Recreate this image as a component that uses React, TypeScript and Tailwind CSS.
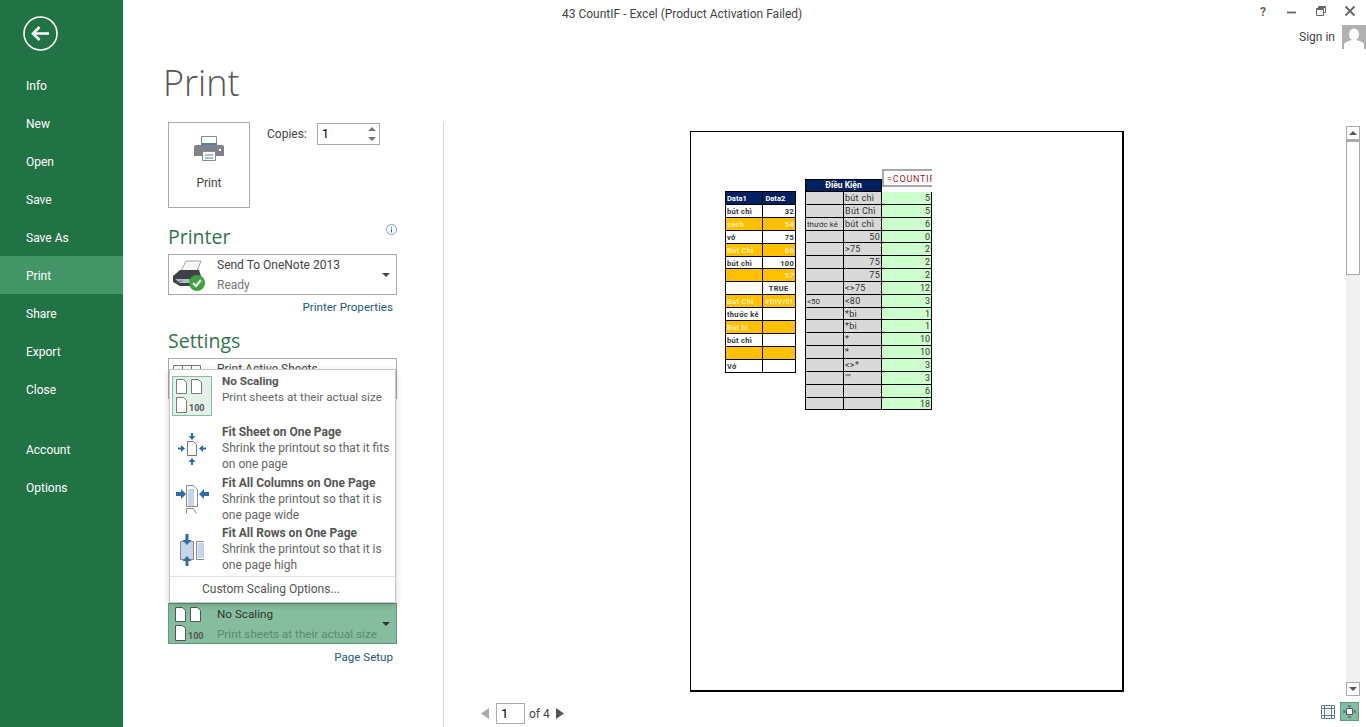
import React from "react";

const font = { fontFamily: 'Roboto, "Open Sans", sans-serif' };
const headFont = { fontFamily: '"Open Sans", "Noto Sans", sans-serif' };

const navTop = ["Info", "New", "Open", "Save", "Save As", "Print", "Share", "Export", "Close"];
const navBottom = ["Account", "Options"];

const dataRows = [
  { a: "bút chì", b: "32" },
  { a: "sách", b: "54", hl: true },
  { a: "vở", b: "75" },
  { a: "Bút Chì", b: "86", hl: true },
  { a: "bút chì", b: "100" },
  { a: "", b: "57", hl: true },
  { a: "", b: "TRUE", center: true },
  { a: "Bút Chì", b: "#DIV/0!", hl: true, center: true },
  { a: "thước kẻ", b: "" },
  { a: "Bút bi", b: "", hl: true },
  { a: "bút chì", b: "" },
  { a: "", b: "", hl: true },
  { a: "Vở", b: "" },
];

const condRows = [
  { a: "", b: "bút chì", c: "5" },
  { a: "", b: "Bút Chì", c: "5" },
  { a: "thước kẻ", b: "bút chì", c: "6" },
  { a: "", b: "50", c: "0", right: true },
  { a: "", b: ">75", c: "2" },
  { a: "", b: "75", c: "2", right: true },
  { a: "", b: "75", c: "2", right: true },
  { a: "", b: "<>75", c: "12" },
  { a: "<50", b: "<80", c: "3" },
  { a: "", b: "*bi", c: "1" },
  { a: "", b: "*bi", c: "1" },
  { a: "", b: "*", c: "10" },
  { a: "", b: "*", c: "10" },
  { a: "", b: "<>*", c: "3" },
  { a: "", b: '""', c: "3" },
  { a: "", b: "", c: "6" },
  { a: "", b: "", c: "18" },
];

const NoScalingIcon = ({ stroke = "#7a7a7a", fill = "#ffffff" }: { stroke?: string; fill?: string }) => (
  <svg width="34" height="34" viewBox="0 0 34 34">
    <path d="M1.500.5h7l3 3v11h-10z" fill={fill} stroke={stroke} />
    <path d="M16.500.5h7l3 3v11h-10z" fill={fill} stroke={stroke} />
    <path d="M1.500 18.500h7l3 3v12h-10z" fill={fill} stroke={stroke} />
    <text x="14" y="32" fontSize="9" fontWeight="700" fill="#555" style={font}>
      100
    </text>
  </svg>
);

const Arrow = ({ d }: { d: string }) => <path d={d} fill="#2f6ea5" />;

const FitSheetIcon = () => (
  <svg width="28" height="32" viewBox="0 0 28 32">
    <path d="M9.500 8.500h6l3 3v11h-9z" fill="#fff" stroke="#777" />
    <Arrow d="M13 0v3h-2.500l3.500 4 3.500-4h-2.500v-3z" />
    <Arrow d="M13 32v-3h-2.500l3.500-4 3.500 4h-2.500v3z" />
    <Arrow d="M0 14.500h3v-2.500l4 3.500-4 3.500v-2.500h-3z" />
    <Arrow d="M28 14.500h-3v-2.500l-4 3.500 4 3.500v-2.500h3z" />
  </svg>
);

const FitColsIcon = () => (
  <svg width="33" height="29" viewBox="0 0 33 29">
    <path d="M10.500.5h7l4 4v17h-11z" fill="#fff" stroke="#8a8a8a" />
    <path d="M12 4h6v17h-6z" fill="#c5d6ea" />
    <path d="M10.500 28.500v-5h7l3 5" fill="#fff" stroke="#8a8a8a" />
    <Arrow d="M0 7h5v-3l5 5-5 5v-3h-5z" />
    <Arrow d="M33 7h-5v-3l-5 5 5 5v-3h5z" />
  </svg>
);

const FitRowsIcon = () => (
  <svg width="26" height="32" viewBox="0 0 26 32">
    <path d="M1.500 7.500h13v18h-13z" fill="#c5d6ea" stroke="#8a8a8a" />
    <path d="M25 7.500h-7.500v18H25" fill="#fff" stroke="#8a8a8a" />
    <path d="M18.500 9h6.500v15h-6.500z" fill="#c5d6ea" />
    <Arrow d="M6.500 0v6h-3l4.500 5 4.500-5h-3v-6z" />
    <Arrow d="M6.500 32v-5h-3l4.500-5 4.500 5h-3v5z" />
  </svg>
);

const scalingOptions = [
  { title: "Fit Sheet on One Page", lines: ["Shrink the printout so that it fits", "on one page"], icon: <FitSheetIcon /> },
  { title: "Fit All Columns on One Page", lines: ["Shrink the printout so that it is", "one page wide"], icon: <FitColsIcon /> },
  { title: "Fit All Rows on One Page", lines: ["Shrink the printout so that it is", "one page high"], icon: <FitRowsIcon /> },
];

export default function App() {
  return (
    <div className="flex h-[727px] w-[1366px] overflow-hidden bg-white text-[#444]" style={font}>
      {/* backstage nav */}
      <div className="flex h-full w-[123px] shrink-0 flex-col bg-[#217346] text-[12px] text-white">
        <div className="flex h-[66px] shrink-0 items-start pl-[23px] pt-[16px]">
          <svg width="35" height="35" viewBox="0 0 35 35" fill="none" stroke="#fff">
            <circle cx="17.500" cy="17.500" r="16.500" strokeWidth="1.600" />
            <path d="M26 17.500H10M16.500 11l-6.500 6.500 6.500 6.500" strokeWidth="2.600" />
          </svg>
        </div>
        {navTop.map((item) => (
          <div
            key={item}
            className={`flex h-[38px] shrink-0 items-center pl-[26px] pt-[2px] ${item === "Print" ? "bg-[#439467]" : ""}`}
          >
            {item}
          </div>
        ))}
        <div className="h-[22px] shrink-0" />
        {navBottom.map((item) => (
          <div key={item} className="flex h-[38px] shrink-0 items-center pl-[26px] pt-[2px]">
            {item}
          </div>
        ))}
      </div>

      <div className="flex min-w-0 flex-1 flex-col">
        {/* title bar */}
        <div className="flex h-[50px] shrink-0 justify-between">
          <div className="pl-[439px] pt-[5px] text-[12px] text-[#444]">43 CountIF - Excel (Product Activation Failed)</div>
          <div className="flex flex-col items-end">
            <div className="flex h-[25px] items-start pr-[10px] pt-[5px]">
              <span className="mr-[20px] mt-[-2px] text-[12px] font-bold text-[#666]">?</span>
              <svg className="mr-[17px]" width="12" height="12" viewBox="0 0 12 12">
                <path d="M1 7.500h9" stroke="#666" strokeWidth="1.800" />
              </svg>
              <svg className="mr-[17px]" width="12" height="12" viewBox="0 0 12 12" fill="none" stroke="#666">
                <path d="M3.500 3V1.500h7v6H8" />
                <path d="M1.500 3.500h7v7h-7z" />
                <path d="M1.500 4.500h7M3.500 2.500h7" />
              </svg>
              <svg width="12" height="12" viewBox="0 0 12 12" stroke="#666" strokeWidth="1.800">
                <path d="M1.500 1.500l9 9M10.500 1.500l-9 9" />
              </svg>
            </div>
            <div className="flex h-[25px] items-start">
              <span className="mr-[7px] mt-[3px] text-[12px] text-[#444]">Sign in</span>
              <svg width="24" height="24" viewBox="0 0 24 24">
                <rect width="24" height="24" fill="#b1b1b1" />
                <ellipse cx="12" cy="9.500" rx="5" ry="6" fill="#fff" />
                <path d="M2 24v-4c0-3 5-4 7-5h6c2 1 7 2 7 5v4z" fill="#fff" />
              </svg>
            </div>
          </div>
        </div>

        <div className="h-[72px] shrink-0 pl-[40px] pt-[8px] text-[36px] font-light leading-[50px] text-[#555]" style={headFont}>
          Print
        </div>

        <div className="flex min-h-0 flex-1">
          {/* settings column */}
          <div className="flex w-[321px] shrink-0 flex-col border-r border-[#d9d9d9] pl-[45px] pr-[46px]">
            <div className="flex items-start">
              <div className="flex h-[86px] w-[82px] flex-col items-center border border-[#ababab] pt-[12px]">
                <svg width="30" height="27" viewBox="0 0 30 27">
                  <path d="M7.500 1.500h15v10h-15z" fill="#fff" stroke="#8a8a8a" />
                  <rect x="7" y="8" width="16" height="4" fill="#5a7fa8" />
                  <path d="M2 10h26a2 2 0 0 1 2 2v9h-30v-9a2 2 0 0 1 2-2z" fill="#7f8389" />
                  <path d="M8.500 16.500h13v9h-13z" fill="#fff" stroke="#8a8a8a" />
                  <path d="M11 20h8M11 23h8" stroke="#5a7fa8" />
                  <rect x="25" y="14" width="2" height="2" fill="#fff" />
                </svg>
                <span className="mt-[12px] text-[12px] text-[#444]">Print</span>
              </div>
              <span className="ml-[17px] mt-[3px] text-[12px] text-[#444]">Copies:</span>
              <div className="ml-[10px] mt-[1px] flex h-[22px] w-[63px] items-center justify-between border border-[#ababab] pl-[4px] pr-[2px] text-[13px] text-black">
                1
                <svg width="10" height="16" viewBox="0 0 10 16" fill="#777">
                  <path d="M5 1l4 4H1zM5 15l4-4H1z" />
                </svg>
              </div>
            </div>

            <div className="relative mt-[15px] h-[28px] text-[19.500px] leading-[28px] text-[#31744f]" style={headFont}>
              Printer
              <svg className="absolute right-[0px] top-[1px]" width="11" height="11" viewBox="0 0 11 11" fill="none">
                <circle cx="5.500" cy="5.500" r="5" stroke="#7aa2c9" />
                <path d="M5.500 2.500v1M5.500 4.500v4" stroke="#4a6f94" />
              </svg>
            </div>
            <div className="mt-[3px] flex h-[41px] items-center border border-[#ababab] pr-[6px]">
              <svg className="ml-[2px] shrink-0" width="36" height="34" viewBox="0 0 36 34">
                <path d="M10 13l5-10h15l-4 10z" fill="#f6f6f6" stroke="#a5a5a5" />
                <path d="M2 18l7-6h19l2 6v7l-4 3H9l-7-4z" fill="#3d4248" />
                <path d="M4 21h14l4 4H9z" fill="#aeb9c4" />
                <path d="M6 24l5-1" stroke="#4d86c4" />
                <circle cx="26" cy="25" r="8" fill="#3da43b" />
                <path d="M22 25l3 3 5-6" fill="none" stroke="#fff" strokeWidth="2" />
              </svg>
              <div className="ml-[10px] flex-1 text-[12px] leading-[20px]">
                <div className="text-[#444]">Send To OneNote 2013</div>
                <div className="text-[#777]">Ready</div>
              </div>
              <svg width="8" height="4" viewBox="0 0 8 4" fill="#444">
                <path d="M0 0h8L4 4z" />
              </svg>
            </div>
            <div className="mt-[3px] pr-[4px] text-right text-[11.600px] leading-[18px] text-[#26587c]">Printer Properties</div>

            <div className="mt-[11px] h-[28px] text-[19.500px] leading-[28px] text-[#31744f]" style={headFont}>
              Settings
            </div>

            {/* settings list, covered by the open scaling menu */}
            <div className="relative mt-[3px] flex flex-col">
              <div className="flex h-[41px] items-start border border-[#ababab] pl-[4px] text-[12px] leading-[20px] text-[#444]">
                <svg className="mt-[6px] shrink-0" width="28" height="6" viewBox="0 0 28 6" fill="none" stroke="#777">
                  <path d="M.5 6V.5h27V6M9.500 .5V6M18.500 .5V6" />
                </svg>
                <span className="ml-[16px]">Print Active Sheets</span>
              </div>
              <div className="h-[204px]" />
              <div className="flex h-[41px] items-center border border-[#5d9c79] bg-[#86bd9e] pr-[6px]">
                <div className="ml-[5px] shrink-0">
                  <NoScalingIcon stroke="#555" />
                </div>
                <div className="ml-[9px] flex-1 whitespace-nowrap text-[11.700px] leading-[20px]">
                  <div className="text-[#333]">No Scaling</div>
                  <div className="text-[#5f8a72]">Print sheets at their actual size</div>
                </div>
                <svg width="8" height="4" viewBox="0 0 8 4" fill="#333">
                  <path d="M0 0h8L4 4z" />
                </svg>
              </div>

              <div className="absolute left-[1px] top-[11px] w-[227px] border border-[#c6c6c6] bg-white shadow-[0_2px_6px_rgba(0,0,0,0.2)]">
                <div className="flex h-[54px] pl-[2px] pt-[6px]">
                  <div className="flex h-[40px] w-[40px] shrink-0 items-center justify-center border border-[#86bd9e] bg-[#e3f1e8]">
                    <NoScalingIcon />
                  </div>
                  <div className="ml-[10px] mt-[-3px] text-[11.700px] leading-[16px]">
                    <div className="font-bold text-[#555]">No Scaling</div>
                    <div className="text-[#666]">Print sheets at their actual size</div>
                  </div>
                </div>
                {scalingOptions.map((opt) => (
                  <div key={opt.title} className="flex h-[50.500px] pl-[2px]">
                    <div className="flex h-[50px] w-[40px] shrink-0 items-center justify-center">{opt.icon}</div>
                    <div className="ml-[10px] whitespace-nowrap text-[12px] leading-[16px]">
                      <div className="font-bold text-[#555]">{opt.title}</div>
                      {opt.lines.map((line) => (
                        <div key={line} className="text-[#666]">
                          {line}
                        </div>
                      ))}
                    </div>
                  </div>
                ))}
                <div className="flex h-[26.500px] items-center border-t border-[#e1e1e1] pl-[32px] text-[12px] text-[#555]">
                  Custom Scaling Options...
                </div>
              </div>
            </div>
            <div className="mt-[4px] pr-[4px] text-right text-[11.600px] leading-[18px] text-[#26587c]">Page Setup</div>
          </div>

          {/* preview */}
          <div className="flex min-w-0 flex-1 flex-col">
            <div className="flex h-[574px] shrink-0">
              <div className="flex-1 pl-[246px] pt-[9px]">
                <div className="relative h-[561px] w-[434px] border-b-2 border-l border-r-2 border-t border-black bg-white">
                  <div className="flex items-start pl-[34px] pt-[47px]">
                    <div className="mt-[12px] w-[71px] border-l border-t border-black text-[7.500px] font-bold">
                      <div className="flex h-[13px] bg-[#002060] text-white">
                        <div className="w-[38px] border-b border-r border-black pl-[1px] leading-[13px]">Data1</div>
                        <div className="w-[33px] border-b border-r border-black pl-[2px] leading-[13px]">Data2</div>
                      </div>
                      {dataRows.map((row, i) => (
                        <div key={i} className={`flex h-[12.900px] tracking-[0.3px] ${row.hl ? "bg-[#ffc000] text-[#ffedb0]" : "bg-white text-[#333]"}`}>
                          <div className="w-[38px] border-b border-r border-black pl-[1px] leading-[13px]">{row.a}</div>
                          <div className={`w-[33px] border-b border-r border-black pr-[1px] leading-[13px] ${row.center ? "text-center" : "text-right"}`}>
                            {row.b}
                          </div>
                        </div>
                      ))}
                    </div>

                    <div className="ml-[9px] w-[127px] text-[9px] text-[#333]">
                      <div className="flex h-[13px] w-[77px] items-center justify-center border border-black bg-[#002060] text-[8.500px] font-bold text-white">
                        Điều Kiện
                      </div>
                      {condRows.map((row, i) => (
                        <div key={i} className="flex h-[12.850px] leading-[13px]">
                          <div className="w-[38px] border-b border-l border-black bg-[#d9d9d9] pl-[1px] text-[8px]">{row.a}</div>
                          <div className={`w-[38px] border-b border-l border-black bg-[#d9d9d9] px-[1px] tracking-[0.3px] ${row.right ? "text-right" : ""}`}>{row.b}</div>
                          <div className="flex-1 border-b border-l border-r border-black bg-[#ccffcc] pr-[1px] text-right">{row.c}</div>
                        </div>
                      ))}
                    </div>
                  </div>
                  <div className="absolute left-[191px] top-[37px] flex h-[18px] w-[50px] items-center overflow-hidden whitespace-nowrap border-b-2 border-l-2 border-t-2 border-[#a8a8a8] bg-white pl-[3px] pt-[3px] text-[9px] tracking-[0.8px] text-[#a01c2c]">
                    =COUNTIF
                  </div>
                </div>
              </div>
              {/* scrollbar */}
              <div className="mr-[6px] mt-[4px] flex w-[14px] shrink-0 flex-col">
                <div className="flex h-[14px] shrink-0 items-center justify-center border border-[#ababab]">
                  <svg width="8" height="4" viewBox="0 0 8 4" fill="#555">
                    <path d="M4 0l4 4H0z" />
                  </svg>
                </div>
                <div className="h-[135px] shrink-0 border border-t-2 border-[#ababab] bg-white" />
                <div className="flex-1 bg-[#f0f0f0]" />
                <div className="flex h-[14px] shrink-0 items-center justify-center border border-[#ababab]">
                  <svg width="8" height="4" viewBox="0 0 8 4" fill="#555">
                    <path d="M0 0h8L4 4z" />
                  </svg>
                </div>
              </div>
            </div>

            <div className="flex flex-1 items-start justify-between pl-[37px] pr-[8px] pt-[7px]">
              <div className="flex items-center text-[12px] text-[#444]">
                <svg width="8" height="11" viewBox="0 0 8 11" fill="#aaa">
                  <path d="M8 0v11L0 5.500z" />
                </svg>
                <div className="ml-[7px] flex h-[21px] w-[29px] items-center border border-[#ababab] pl-[4px] text-[13px] text-black">1</div>
                <span className="ml-[4px]">of 4</span>
                <svg className="ml-[6px]" width="8" height="11" viewBox="0 0 8 11" fill="#555">
                  <path d="M0 0v11l8-5.500z" />
                </svg>
              </div>
              <div className="flex items-center gap-[6px]">
                <svg width="14" height="14" viewBox="0 0 14 14" fill="none" stroke="#5f7d8e">
                  <path d="M.5.5h13v13H.500z" />
                  <path d="M3.500.5v13M10.500.5v13M.5 3.500h13M.5 10.500h13" />
                </svg>
                <div className="flex h-[17px] w-[17px] items-center justify-center bg-[#86bd9e] outline outline-1 outline-[#5d9c79]">
                  <svg width="15" height="15" viewBox="0 0 15 15" fill="none">
                    <path d="M4.500 4.500h6v6h-6z" fill="#fff" stroke="#555" />
                    <path d="M5 1.500h5L7.500 3.500zM5 13.500h5l-2.500-2zM1.500 5v5l2-2.500zM13.500 5v5l-2-2.500z" fill="#2f6ea5" />
                  </svg>
                </div>
              </div>
            </div>
          </div>
        </div>
      </div>
    </div>
  );
}
